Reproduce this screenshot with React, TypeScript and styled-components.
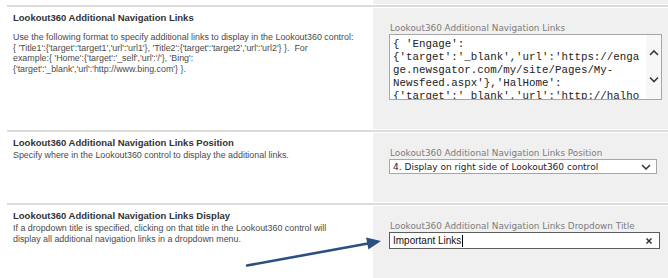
import React from "react";
import styled, { createGlobalStyle } from "styled-components";

const Global = createGlobalStyle`
  html, body { margin: 0; padding: 0; background: #ffffff; }
  body { font-family: "Liberation Sans", Arial, sans-serif; }
`;

const Page = styled.div`
  position: relative;
  width: 668px;
  height: 278px;
  overflow: hidden;
  padding-left: 7px;
  box-sizing: border-box;
`;

const Row = styled.div<{ $h: number }>`
  display: grid;
  grid-template-columns: 366px 295px;
  height: ${(p) => p.$h}px;
`;

const Separator = styled.div`
  height: 2px;
  background: #dcdcdc;
  margin: 1px 0;
`;

const Info = styled.div`
  padding: 4px 6px 0 6px;
  min-width: 0;
`;

const Title = styled.h3`
  margin: 0;
  font-size: 9.5px;
  font-weight: bold;
  line-height: 12px;
  color: #333333;
  white-space: nowrap;
`;

const Desc = styled.p<{ $gap: number }>`
  margin: ${(p) => p.$gap}px 0 0;
  font-size: 8.9px;
  line-height: 10.5px;
  color: #4a4a4a;
  white-space: nowrap;
`;

const Panel = styled.div<{ $empty?: boolean }>`
  background: #f0f0f0;
  padding: ${(p) => (p.$empty ? "0" : "15px 0 0 16px")};
`;

const FieldLabel = styled.div`
  font-family: "DejaVu Sans", Verdana, sans-serif;
  font-size: 8.85px;
  line-height: 11px;
  color: #7b7b7b;
  margin-left: 1px;
  white-space: nowrap;
`;

const TextAreaBox = styled.div`
  display: flex;
  width: 273px;
  height: 66px;
  box-sizing: border-box;
  border: 1px solid #a6a6a6;
  background: #ffffff;
`;

const TextAreaContent = styled.div`
  flex: 1;
  overflow: hidden;
  padding: 3px 0 0 3px;
  font-family: "Liberation Mono", "Courier New", monospace;
  font-size: 10.8px;
  line-height: 13px;
  color: #222222;
  white-space: pre;
`;

const ScrollBar = styled.div`
  width: 15px;
  display: flex;
  flex-direction: column;
  justify-content: space-between;
  align-items: center;
  padding: 14px 0 16px;
  background: #f7f7f7;
`;

const SelectBox = styled.div`
  width: 268px;
  height: 15px;
  box-sizing: border-box;
  border: 1px solid #a6a6a6;
  background: #ffffff;
  display: flex;
  align-items: center;
  justify-content: space-between;
  padding: 0 5px 0 3px;
  font-family: "DejaVu Sans", Verdana, sans-serif;
  font-size: 9px;
  color: #222222;
  white-space: nowrap;
`;

const InputBox = styled.div`
  width: 271px;
  height: 17px;
  box-sizing: border-box;
  border: 1px solid #5c5c5c;
  background: #ffffff;
  display: flex;
  align-items: center;
  justify-content: space-between;
  padding: 0 6px 0 3px;
  font-family: "Liberation Sans", Arial, sans-serif;
  font-size: 10px;
  color: #111111;
`;

const InputText = styled.span`
  display: flex;
  align-items: center;
  white-space: nowrap;
`;

const Caret = styled.span`
  display: inline-block;
  width: 1px;
  height: 12px;
  background: #000000;
  margin-left: 1px;
`;

const Overlay = styled.svg`
  position: absolute;
  left: 0;
  top: 0;
  pointer-events: none;
`;

const Chevron = ({ up }: { up?: boolean }) => (
  <svg width="10" height="7" viewBox="0 0 10 7">
    <polyline
      points={up ? "1,6 5,2 9,6" : "1,1.5 5,5.5 9,1.5"}
      fill="none"
      stroke="#3a3a3a"
      strokeWidth="1.6"
    />
  </svg>
);

const SelectArrow = () => (
  <svg width="10" height="6" viewBox="0 0 10 6">
    <polyline points="1,1 5,5 9,1" fill="none" stroke="#333" strokeWidth="1.5" />
  </svg>
);

const ClearIcon = () => (
  <svg width="8" height="8" viewBox="0 0 8 8">
    <path d="M1.5 1.5 L6.5 6.5 M6.5 1.5 L1.5 6.5" stroke="#333" strokeWidth="1.5" />
  </svg>
);

const textareaLines = [
  "{ 'Engage':",
  "{'target':'_blank','url':'https://enga",
  "ge.newsgator.com/my/site/Pages/My-",
  "Newsfeed.aspx'},'HalHome':",
  "{'target':'_blank','url':'http://halho",
];

export default function App() {
  return (
    <>
      <Global />
      <Page>
        <Row $h={4}>
          <div />
          <Panel $empty />
        </Row>
        <Separator />
        <Row $h={121}>
          <Info>
            <Title>Lookout360 Additional Navigation Links</Title>
            <Desc $gap={8}>
              Use the following format to specify additional links to display in the Lookout360 control:
              <br />
              {"{ 'Title1':{'target':'target1','url':'url1'}, 'Title2':{'target':'target2','url':'url2'} }.\u00a0 For"}
              <br />
              {"example:{ 'Home':{'target':'_self','url':'/'}, 'Bing':"}
              <br />
              {"{'target':'_blank','url':'http://www.bing.com'} }."}
            </Desc>
          </Info>
          <Panel>
            <FieldLabel>Lookout360 Additional Navigation Links</FieldLabel>
            <TextAreaBox>
              <TextAreaContent>{textareaLines.join("\n")}</TextAreaContent>
              <ScrollBar>
                <Chevron up />
                <Chevron />
              </ScrollBar>
            </TextAreaBox>
          </Panel>
        </Row>
        <Separator />
        <Row $h={69}>
          <Info>
            <Title>Lookout360 Additional Navigation Links Position</Title>
            <Desc $gap={1}>Specify where in the Lookout360 control to display the additional links.</Desc>
          </Info>
          <Panel>
            <FieldLabel>Lookout360 Additional Navigation Links Position</FieldLabel>
            <SelectBox>
              <span>4. Display on right side of Lookout360 control</span>
              <SelectArrow />
            </SelectBox>
          </Panel>
        </Row>
        <Separator />
        <Row $h={72}>
          <Info>
            <Title>Lookout360 Additional Navigation Links Display</Title>
            <Desc $gap={1}>
              If a dropdown title is specified, clicking on that title in the Lookout360 control will
              <br />
              display all additional navigation links in a dropdown menu.
            </Desc>
          </Info>
          <Panel>
            <FieldLabel>Lookout360 Additional Navigation Links Dropdown Title</FieldLabel>
            <InputBox>
              <InputText>
                Important Links
                <Caret />
              </InputText>
              <ClearIcon />
            </InputBox>
          </Panel>
        </Row>
        <Overlay width="668" height="278" viewBox="0 0 668 278">
          <line x1="247" y1="265.5" x2="368" y2="243.5" stroke="#2c4f82" strokeWidth="2.6" strokeLinecap="round" />
          <polygon points="381,241 366.1,237.4 368.4,249.6" fill="#2c4f82" />
        </Overlay>
      </Page>
    </>
  );
}
